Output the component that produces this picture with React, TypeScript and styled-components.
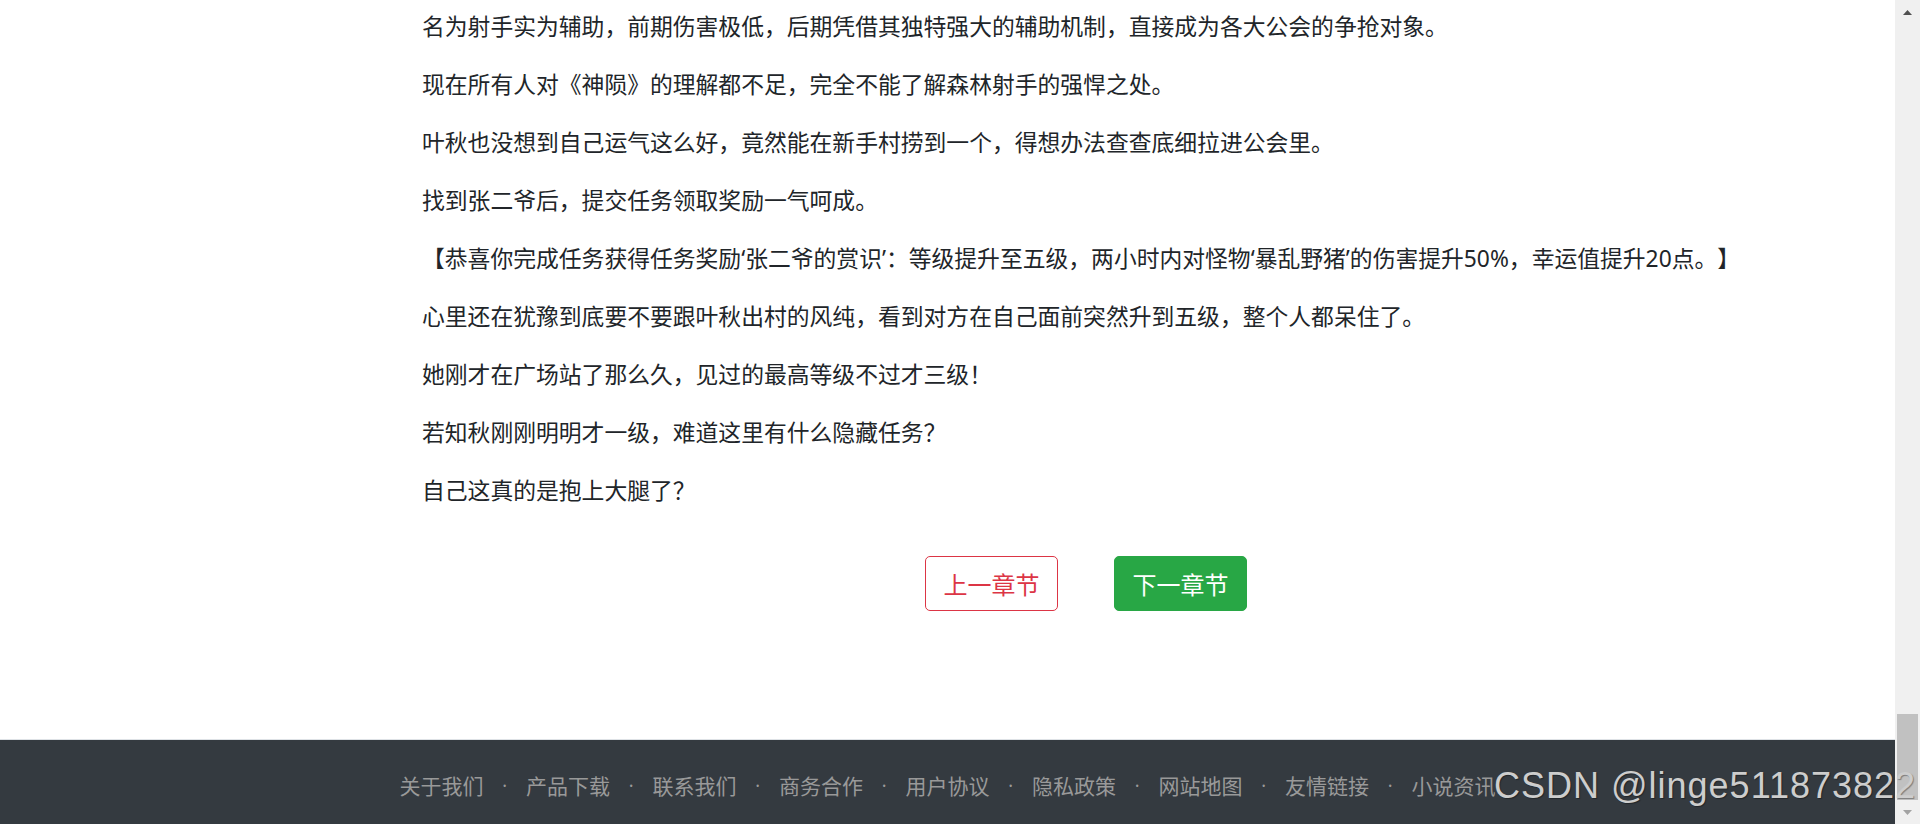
import React from "react";
import styled, { createGlobalStyle } from "styled-components";

const GlobalStyle = createGlobalStyle`
  html, body {
    margin: 0;
    padding: 0;
    height: 100%;
    overflow: hidden;
    background: #ffffff;
  }
  body {
    font-family: "Noto Sans", "Noto Sans CJK SC", sans-serif;
    color: #212529;
  }
  * { box-sizing: border-box; }
`;

const Shell = styled.div`
  position: relative;
  display: flex;
  flex-direction: row;
  width: 100%;
  height: 100vh;
  overflow: hidden;
`;

const Page = styled.div`
  flex: 1;
  display: flex;
  flex-direction: column;
  min-width: 0;
`;

const Article = styled.main`
  flex: 1;
  display: grid;
  grid-template-columns: 422px 1328px 1fr;
  padding-top: 9px;
`;

const Content = styled.div`
  grid-column: 2;
  display: flex;
  flex-direction: column;
`;

const Paragraph = styled.p`
  margin: 0 0 22px;
  font-size: 22.8px;
  line-height: 36px;
  color: #212529;
  white-space: nowrap;
  text-spacing-trim: space-all;
`;

const ButtonRow = styled.div`
  display: flex;
  justify-content: center;
  gap: 56px;
  padding-top: 25px;
`;

const ChapterButton = styled.button<{ $variant: "outline" | "solid" }>`
  width: 133px;
  height: 55px;
  padding: 0;
  border-radius: 5px;
  font-family: "Noto Sans CJK SC", sans-serif;
  font-size: 24px;
  line-height: 1;
  cursor: pointer;
  border: 1px solid ${(p) => (p.$variant === "outline" ? "#dc3545" : "#28a745")};
  background: ${(p) => (p.$variant === "outline" ? "#ffffff" : "#28a745")};
  color: ${(p) => (p.$variant === "outline" ? "#dc3545" : "#ffffff")};
`;

const Footer = styled.footer`
  height: 85px;
  border-top: 1px solid #dee2e6;
  background: #343a40;
  display: flex;
  justify-content: center;
  align-items: center;
  padding-top: 6px;
`;

const FooterLink = styled.a`
  font-family: "Noto Sans CJK SC", sans-serif;
  font-size: 21px;
  color: #999999;
  text-decoration: none;
  white-space: nowrap;
`;

const Sep = styled.span`
  display: inline-block;
  width: 42.5px;
  text-align: center;
  font-size: 18px;
  color: #999999;
`;

const Scrollbar = styled.div`
  width: 25px;
  background: #f0f0f0;
  display: flex;
  flex-direction: column;
  align-items: center;
`;

const ArrowBox = styled.div`
  height: 24px;
  width: 100%;
  display: flex;
  align-items: center;
  justify-content: center;
`;

const Track = styled.div`
  flex: 1;
  width: 100%;
  display: flex;
  flex-direction: column;
  justify-content: flex-end;
  align-items: center;
`;

const Thumb = styled.div`
  width: 21px;
  height: 86px;
  background: #c1c1c1;
`;

const Watermark = styled.div`
  position: absolute;
  left: 1494px;
  top: 768px;
  font-family: "Liberation Sans", Arial, sans-serif;
  font-size: 36px;
  letter-spacing: 1px;
  line-height: 1;
  color: #cdcdcd;
  white-space: nowrap;
  text-shadow: 1px 1px 1px rgba(0, 0, 0, 0.35);
  pointer-events: none;
`;

const paragraphs = [
  "名为射手实为辅助，前期伤害极低，后期凭借其独特强大的辅助机制，直接成为各大公会的争抢对象。",
  "现在所有人对《神陨》的理解都不足，完全不能了解森林射手的强悍之处。",
  "叶秋也没想到自己运气这么好，竟然能在新手村捞到一个，得想办法查查底细拉进公会里。",
  "找到张二爷后，提交任务领取奖励一气呵成。",
  "【恭喜你完成任务获得任务奖励‘张二爷的赏识’：等级提升至五级，两小时内对怪物‘暴乱野猪’的伤害提升50%，幸运值提升20点。】",
  "心里还在犹豫到底要不要跟叶秋出村的风纯，看到对方在自己面前突然升到五级，整个人都呆住了。",
  "她刚才在广场站了那么久，见过的最高等级不过才三级！",
  "若知秋刚刚明明才一级，难道这里有什么隐藏任务？",
  "自己这真的是抱上大腿了？",
];

const links = ["关于我们", "产品下载", "联系我们", "商务合作", "用户协议", "隐私政策", "网站地图", "友情链接", "小说资讯"];

export default function App() {
  return (
    <>
      <GlobalStyle />
      <Shell>
        <Page>
          <Article>
            <Content>
              {paragraphs.map((t, i) => (
                <Paragraph key={i}>{t}</Paragraph>
              ))}
              <ButtonRow>
                <ChapterButton $variant="outline">上一章节</ChapterButton>
                <ChapterButton $variant="solid">下一章节</ChapterButton>
              </ButtonRow>
            </Content>
          </Article>
          <Footer>
            {links.map((l, i) => (
              <React.Fragment key={l}>
                {i > 0 && <Sep>·</Sep>}
                <FooterLink href="#">{l}</FooterLink>
              </React.Fragment>
            ))}
          </Footer>
        </Page>
        <Scrollbar>
          <ArrowBox>
            <svg width="9" height="5" viewBox="0 0 9 5">
              <polygon points="4.5,0 9,5 0,5" fill="#505050" />
            </svg>
          </ArrowBox>
          <Track>
            <Thumb />
          </Track>
          <ArrowBox>
            <svg width="9" height="5" viewBox="0 0 9 5">
              <polygon points="0,0 9,0 4.5,5" fill="#a3a3a3" />
            </svg>
          </ArrowBox>
        </Scrollbar>
        <Watermark>CSDN @linge511873822</Watermark>
      </Shell>
    </>
  );
}
